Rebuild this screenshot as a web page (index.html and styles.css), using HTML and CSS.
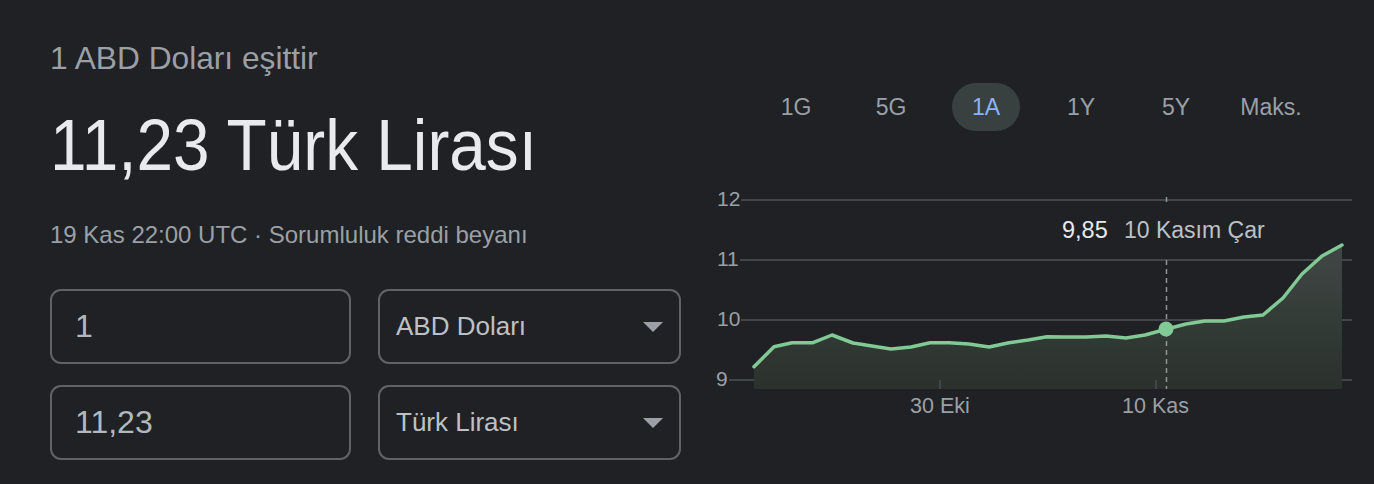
FILE: index.html
```html
<!DOCTYPE html>
<html lang="tr">
<head>
<meta charset="utf-8">
<title>Döviz</title>
<link rel="stylesheet" href="styles.css">
</head>
<body>
<div class="page">
  <section class="left">
    <div class="eq">1 ABD Doları eşittir</div>
    <div class="result"><span class="result-text">11,23 Türk Lirası</span></div>
    <div class="meta">19 Kas 22:00 UTC · <span class="disc">Sorumluluk reddi beyanı</span></div>
    <div class="form">
      <div class="field input"><span>1</span></div>
      <div class="field select"><span>ABD Doları</span><span class="arrow"></span></div>
      <div class="field input"><span>11,23</span></div>
      <div class="field select"><span>Türk Lirası</span><span class="arrow"></span></div>
    </div>
  </section>
  <section class="right">
    <div class="tabs">
      <div class="tab">1G</div>
      <div class="tab">5G</div>
      <div class="tab active">1A</div>
      <div class="tab">1Y</div>
      <div class="tab">5Y</div>
      <div class="tab">Maks.</div>
    </div>
    <svg class="chart" width="674" height="250" viewBox="0 0 674 250">
      <defs>
        <linearGradient id="fillg" x1="0" y1="0" x2="0" y2="1">
          <stop offset="0" stop-color="#414746"/>
          <stop offset="0.6" stop-color="#323a35"/>
          <stop offset="1" stop-color="#2b312d"/>
        </linearGradient>
      </defs>
      <g class="grid">
        <line x1="41" y1="20" x2="652" y2="20"/>
        <line x1="40" y1="80" x2="652" y2="80"/>
        <line x1="41" y1="140" x2="652" y2="140"/>
        <line x1="29" y1="200" x2="652" y2="200"/>
      </g>
      <g class="ylab">
        <text x="17" y="26">12</text>
        <text x="17" y="86">11</text>
        <text x="17" y="146">10</text>
        <text x="16" y="206">9</text>
      </g>
      <polygon class="area" points="54,186.7 74,166.7 92,162.7 113,162.7 132,155 153,163 172,166 191,169 211,167 230,162.7 249,162.7 269,164 289,167 309,162.7 328,160 347,156.7 366,157 386,157 406,156 426,158 445,155 466,149.3 486,144 505,141 524,141 544,137 563,135 583,118 602,94 622,76 642,65 642,209 54,209"/>
      <g class="ticks">
        <line x1="240" y1="200" x2="240" y2="209"/>
        <line x1="456" y1="200" x2="456" y2="209"/>
      </g>
      <line class="cursor" x1="466.5" y1="17" x2="466.5" y2="209"/>
      <rect class="mask" x="355" y="24" width="240" height="54"/>
      <polyline class="line" points="54,186.7 74,166.7 92,162.7 113,162.7 132,155 153,163 172,166 191,169 211,167 230,162.7 249,162.7 269,164 289,167 309,162.7 328,160 347,156.7 366,157 386,157 406,156 426,158 445,155 466,149.3 486,144 505,141 524,141 544,137 563,135 583,118 602,94 622,76 642,65"/>
      <circle class="dot" cx="466" cy="149" r="7.5"/>
      <text class="tip-val" x="362" y="58">9,85</text>
      <text class="tip-date" x="424" y="58">10 Kasım Çar</text>
      <g class="xlab">
        <text x="240" y="233">30 Eki</text>
        <text x="455.5" y="233">10 Kas</text>
      </g>
    </svg>
  </section>
</div>
</body>
</html>
```

FILE: styles.css
```css
html, body {
  margin: 0;
  padding: 0;
  background: #202124;
}
body {
  font-family: "Liberation Sans", Arial, Helvetica, sans-serif;
  width: 1374px;
  height: 484px;
  overflow: hidden;
}
.page {
  display: flex;
  align-items: flex-start;
}
.left {
  width: 650px;
  padding-left: 50px;
  padding-top: 40px;
}
.eq {
  color: #9aa0a6;
  font-size: 31.7px;
  line-height: 36px;
  white-space: nowrap;
}
.result {
  margin-top: 27px;
  height: 84px;
  white-space: nowrap;
}
.result-text {
  display: inline-block;
  color: #e8eaed;
  font-size: 73px;
  line-height: 84px;
  transform: scaleX(0.9);
  transform-origin: left center;
}
.meta {
  margin-top: 34px;
  color: #9aa0a6;
  font-size: 24px;
  line-height: 28px;
  white-space: nowrap;
}
.form {
  margin-top: 40px;
  display: grid;
  grid-template-columns: 301px 303px;
  column-gap: 27px;
  row-gap: 21px;
}
.field {
  box-sizing: border-box;
  height: 75px;
  border: 2px solid #5f6368;
  border-radius: 11px;
  display: flex;
  align-items: center;
}
.input {
  padding-left: 23px;
  color: #b3b8bd;
  font-size: 32px;
}
.select {
  padding: 0 16px 0 16px;
  justify-content: space-between;
  color: #bdc1c6;
  font-size: 26px;
}
.arrow {
  width: 0;
  height: 0;
  border-left: 10px solid transparent;
  border-right: 10px solid transparent;
  border-top: 10px solid #9aa0a6;
}
.right {
  flex: 1;
}
.tabs {
  margin-top: 83px;
  padding-left: 62px;
  display: flex;
  gap: 27px;
  height: 48px;
}
.tab {
  width: 68px;
  height: 48px;
  border-radius: 24px;
  display: flex;
  align-items: center;
  justify-content: center;
  color: #9aa0a6;
  font-size: 23px;
  white-space: nowrap;
}
.tab.active {
  background: #394040;
  color: #8ab4f8;
}
.chart {
  display: block;
  margin-top: 49px;
  font-family: "Liberation Sans", Arial, sans-serif;
}
.grid line, .ticks line {
  stroke: #41464a;
  stroke-width: 2;
}
.ylab text {
  fill: #9aa0a6;
  font-size: 21px;
}
.area {
  fill: url(#fillg);
}
.cursor {
  stroke: #8f9498;
  stroke-width: 1.5;
  stroke-dasharray: 5 4;
}
.mask {
  fill: #202124;
}
.line {
  fill: none;
  stroke: #81c995;
  stroke-width: 3.5;
  stroke-linejoin: round;
  stroke-linecap: round;
}
.dot {
  fill: #81c995;
}
.tip-val {
  fill: #e8eaed;
  font-size: 23.5px;
}
.tip-date {
  fill: #bdc1c6;
  font-size: 23px;
}
.xlab text {
  fill: #9aa0a6;
  font-size: 21.5px;
  text-anchor: middle;
}
```
